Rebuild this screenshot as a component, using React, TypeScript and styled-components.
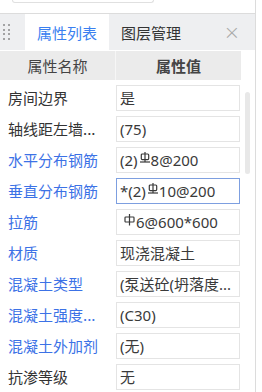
import styled, { createGlobalStyle } from "styled-components";

const GlobalStyle = createGlobalStyle`
    html, body {
        margin: 0;
        padding: 0;
        background: #ffffff;
    }
    body {
        font-family: "Noto Sans", "Noto Sans CJK SC", sans-serif;
    }
`;

type Row = {
    label: string;
    value: React.ReactNode;
    blue?: boolean;
    active?: boolean;
    indent?: boolean;
};

function Hrb400() {
    return (
        <Rebar width="10" height="12" viewBox="0 0 10 12">
            <rect x="1.3" y="2" width="7.4" height="5.6" rx="1" fill="none" stroke="#3a3a3a" strokeWidth="1.2" />
            <line x1="5" y1="0" x2="5" y2="10" stroke="#3a3a3a" strokeWidth="1.2" />
            <line x1="0" y1="10" x2="10" y2="10" stroke="#3a3a3a" strokeWidth="1.2" />
        </Rebar>
    );
}

function Hpb300() {
    return (
        <Rebar width="11" height="12" viewBox="0 0 11 12">
            <rect x="1" y="3" width="9" height="5" rx="0.8" fill="none" stroke="#3a3a3a" strokeWidth="1.2" />
            <line x1="5.5" y1="0" x2="5.5" y2="11.5" stroke="#3a3a3a" strokeWidth="1.2" />
        </Rebar>
    );
}

const rows: Row[] = [
    { label: "房间边界", value: "是" },
    { label: "轴线距左墙...", value: "(75)" },
    { label: "水平分布钢筋", value: <>(2)<Hrb400 />8@200</>, blue: true },
    { label: "垂直分布钢筋", value: <>*(2)<Hrb400 />10@200</>, blue: true, active: true },
    { label: "拉筋", value: <><Hpb300 />6@600*600</>, blue: true, indent: true },
    { label: "材质", value: "现浇混凝土", blue: true },
    { label: "混凝土类型", value: "(泵送砼(坍落度...", blue: true },
    { label: "混凝土强度...", value: "(C30)", blue: true },
    { label: "混凝土外加剂", value: "(无)", blue: true },
    { label: "抗渗等级", value: "无" },
];

function App() {
    return (
        <>
            <GlobalStyle />
            <Frame>
                <TopStrip>
                    <StubBox />
                </TopStrip>
                <Panel>
                    <TabBar>
                        <Handle>
                            {Array.from({ length: 8 }).map((_, i) => (
                                <Dot key={i} />
                            ))}
                        </Handle>
                        <Tab $active>属性列表</Tab>
                        <Tab>图层管理</Tab>
                        <Close>×</Close>
                    </TabBar>
                    <Body>
                        <Grid>
                            <HeaderRow>
                                <HeadCell>属性名称</HeadCell>
                                <HeadCell $bold>属性值</HeadCell>
                            </HeaderRow>
                            <List>
                                {rows.map(r => (
                                    <PropRow key={r.label}>
                                        <Label $blue={r.blue}>{r.label}</Label>
                                        <ValueBox $active={r.active} $indent={r.indent}>
                                            {r.value}
                                        </ValueBox>
                                    </PropRow>
                                ))}
                            </List>
                        </Grid>
                        <ScrollTrack>
                            <Thumb />
                        </ScrollTrack>
                    </Body>
                </Panel>
            </Frame>
        </>
    );
}

export default App;

const Frame = styled.div`
    width: 255px;
    height: 392px;
    border-right: 1px solid #dcdcdc;
    display: flex;
    flex-direction: column;
    overflow: hidden;
`;

const TopStrip = styled.div`
    height: 13px;
    flex-shrink: 0;
`;

const StubBox = styled.div`
    margin-left: 12px;
    width: 140px;
    height: 2px;
    border: 1px solid #e0e0e0;
    border-top: none;
    border-radius: 0 0 3px 3px;
`;

const Panel = styled.div`
    flex: 1;
    border-top: 1px solid #dcdcdc;
    display: flex;
    flex-direction: column;
`;

const TabBar = styled.div`
    height: 36px;
    background: #eeeff1;
    display: flex;
    align-items: stretch;
    flex-shrink: 0;
`;

const Handle = styled.div`
    width: 25px;
    display: grid;
    grid-template-columns: repeat(2, 2px);
    grid-auto-rows: 2px;
    column-gap: 3px;
    row-gap: 2.5px;
    align-content: center;
    padding-left: 3px;
    box-sizing: border-box;
`;

const Dot = styled.span`
    background: #8a8a8a;
    border-radius: 1px;
`;

const Tab = styled.div<{ $active?: boolean }>`
    width: 84px;
    display: flex;
    align-items: center;
    justify-content: center;
    font-size: 15px;
    font-family: "Noto Sans CJK SC", sans-serif;
    color: ${p => (p.$active ? "#3a7ff0" : "#333333")};
    background: ${p => (p.$active ? "#ffffff" : "transparent")};
    padding-top: 1px;
`;

const Close = styled.div`
    margin-left: auto;
    width: 30px;
    display: flex;
    align-items: center;
    justify-content: center;
    font-size: 20px;
    font-family: "DejaVu Sans", sans-serif;
    font-weight: 300;
    color: #a8a8a8;
    padding-right: 8px;
`;

const Body = styled.div`
    flex: 1;
    display: flex;
    padding-top: 1px;
`;

const Grid = styled.div`
    width: 240px;
    display: flex;
    flex-direction: column;
`;

const HeaderRow = styled.div`
    display: grid;
    grid-template-columns: 115px 125px;
    column-gap: 1px;
    height: 29px;
    background: #f6f6f6;
`;

const HeadCell = styled.div<{ $bold?: boolean }>`
    background: #ebebeb;
    display: flex;
    align-items: center;
    justify-content: center;
    font-size: 15px;
    font-family: "Noto Sans CJK SC", sans-serif;
    font-weight: ${p => (p.$bold ? 700 : 400)};
    color: #444444;
`;

const List = styled.div`
    padding-top: 2px;
    display: flex;
    flex-direction: column;
`;

const PropRow = styled.div`
    height: 31px;
    display: grid;
    grid-template-columns: 116px 124px;
    align-items: center;
`;

const Label = styled.div<{ $blue?: boolean }>`
    padding-left: 8px;
    font-size: 15px;
    font-family: "Noto Sans CJK SC", sans-serif;
    color: ${p => (p.$blue ? "#3c72e6" : "#333333")};
    white-space: nowrap;
    overflow: hidden;
`;

const ValueBox = styled.div<{ $active?: boolean; $indent?: boolean }>`
    height: 26px;
    box-sizing: border-box;
    border: 1.5px solid ${p => (p.$active ? "#7d9fe0" : "#e4e4e4")};
    display: flex;
    align-items: center;
    padding-left: ${p => (p.$indent ? "5px" : "3px")};
    font-size: 15px;
    font-family: "Noto Sans", "Noto Sans CJK SC", sans-serif;
    color: #3a3a3a;
    white-space: nowrap;
    overflow: hidden;
`;

const Rebar = styled.svg`
    margin: 0 1px 3px 2px;
    flex-shrink: 0;
`;

const ScrollTrack = styled.div`
    flex: 1;
    display: flex;
    justify-content: center;
    padding-top: 41px;
`;

const Thumb = styled.div`
    width: 5px;
    height: 82px;
    background: #e8e8e8;
    border-radius: 3px;
`;
